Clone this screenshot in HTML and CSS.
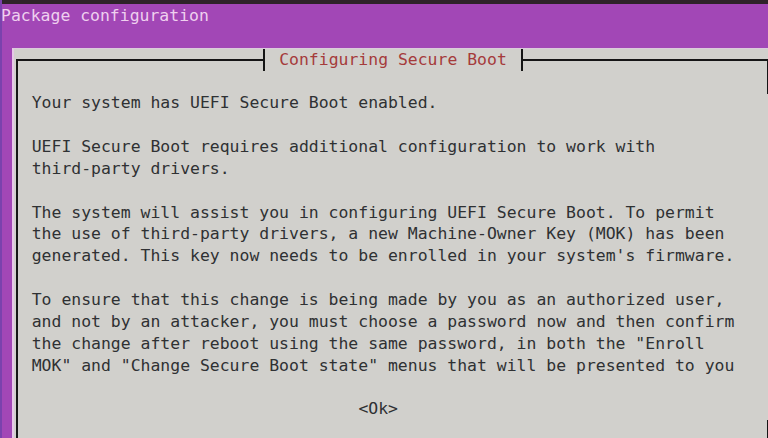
FILE: index.html
```html
<!DOCTYPE html>
<html lang="en">
<head>
<meta charset="utf-8">
<title>Package configuration</title>
<link rel="stylesheet" href="styles.css">
</head>
<body>
<div class="screen">
  <div class="topstrip"></div>
  <div class="term">
    <div class="row backtitle">Package configuration</div>
    <div class="row"></div>
    <div class="dialog">
      <div class="frame">
        <div class="title-row"><span class="title">Configuring Secure Boot</span></div>
        <div class="content">
<p class="para">Your system has UEFI Secure Boot enabled.</p>
<p class="para">UEFI Secure Boot requires additional configuration to work with
third-party drivers.</p>
<p class="para">The system will assist you in configuring UEFI Secure Boot. To permit
the use of third-party drivers, a new Machine-Owner Key (MOK) has been
generated. This key now needs to be enrolled in your system's firmware.</p>
<p class="para">To ensure that this change is being made by you as an authorized user,
and not by an attacker, you must choose a password now and then confirm
the change after reboot using the same password, in both the "Enroll
MOK" and "Change Secure Boot state" menus that will be presented to you</p>
          <div class="buttons"><span class="btn">&lt;Ok&gt;</span></div>
        </div>
        <div class="edge-bottom"></div>
      </div>
    </div>
  </div>
</div>
</body>
</html>
```
FILE: styles.css
```css
:root {
  --lh: 21.85px;
  --purple: #a247b6;
  --gray: #d1d0cc;
  --ink: #2f3133;
}

html, body {
  margin: 0;
  padding: 0;
}

body {
  width: 768px;
  height: 438px;
  overflow: hidden;
  background: var(--purple);
}

.screen {
  width: 768px;
  height: 438px;
  overflow: hidden;
  display: flex;
  flex-direction: column;
  background: var(--purple);
  border-left: 2px solid #7a42ad;
  box-sizing: border-box;
}

.topstrip {
  flex: none;
  height: 4px;
  background: #2e2329;
  margin-left: -2px;
}

.term {
  flex: 1;
  padding: 1px 0 0 0;
  margin-left: -1px;
  font-family: "DejaVu Sans Mono", "Liberation Mono", monospace;
  font-size: 16.45px;
  line-height: var(--lh);
  color: var(--ink);
  overflow: hidden;
}

.row {
  height: var(--lh);
  white-space: pre;
}

.backtitle {
  color: #efd0ef;
}

.dialog {
  margin-left: 10.9px;
  width: 800px;
  height: 420px;
  background: var(--gray);
  border-left: 2px solid #e6c8e7;
  border-top: 1px solid #dccbdc;
  margin-top: -1px;
}

.frame {
  position: relative;
  margin-left: 2px;
  margin-top: 9.9px;
  width: 753px;
  box-sizing: border-box;
  border-top: 2px solid #151515;
  border-left: 2px solid #151515;
  height: 400px;
}

.frame::before {
  content: "";
  position: absolute;
  right: 0;
  top: -2px;
  width: 2px;
  height: 35.8px;
  background: #151515;
}

.edge-bottom {
  position: absolute;
  right: 0;
  top: 359.5px;
  width: 2px;
  height: 40px;
  background: #151515;
}

.title-row {
  display: flex;
  margin-top: -11.9px;
  height: var(--lh);
}

.title {
  margin-left: 245.4px;
  padding: 0 13.85px 0 13.9px;
  border-left: 2px solid #151515;
  border-right: 2px solid #151515;
  background: var(--gray);
  color: #a53b3b;
  white-space: pre;
}

.content {
  padding-top: var(--lh);
  padding-left: 13.8px;
}

.para {
  margin: 0 0 var(--lh) 0;
  white-space: pre;
}

.buttons {
  padding-left: 326.7px;
  white-space: pre;
}

.btn {
  color: var(--ink);
}
```
